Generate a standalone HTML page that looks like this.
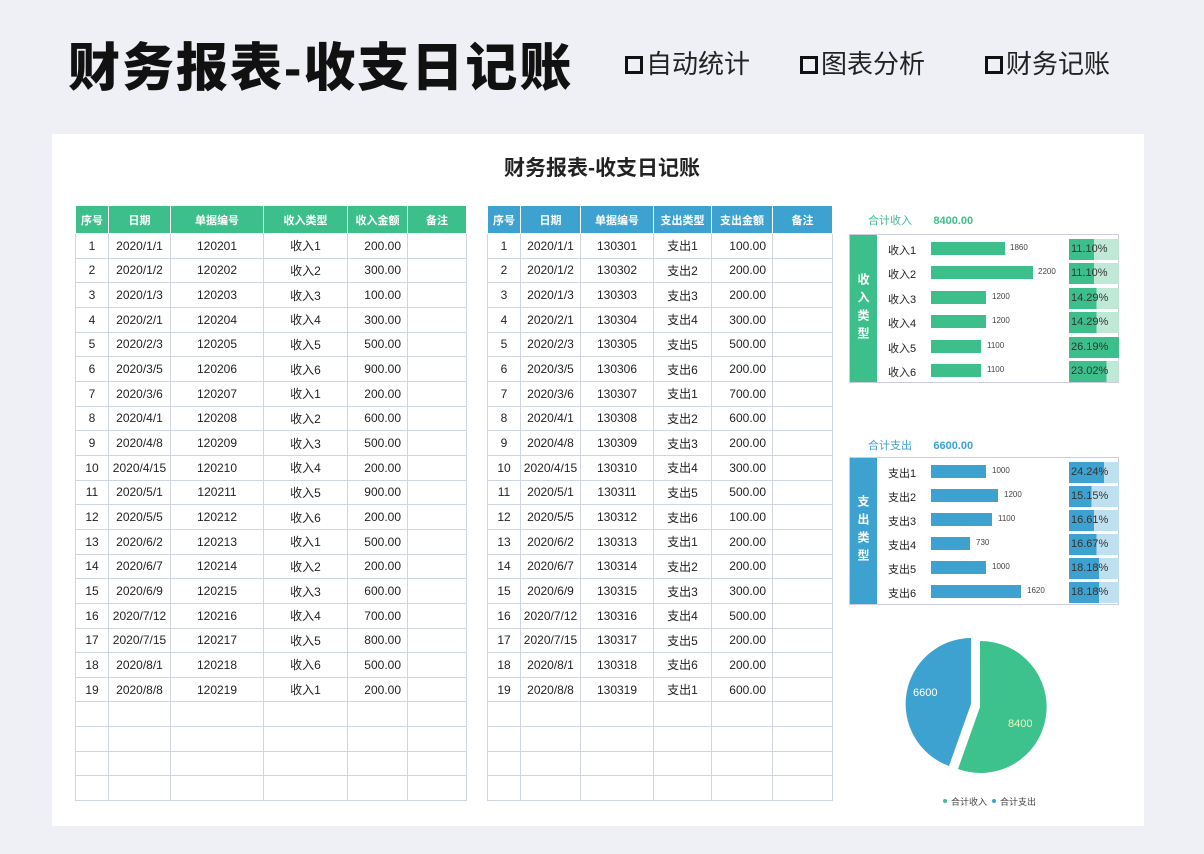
<!DOCTYPE html>
<html><head><meta charset="utf-8"><style>
*{margin:0;padding:0;box-sizing:border-box}
body{width:1204px;height:854px;background:#eef0f5;font-family:"Liberation Sans","Noto Sans CJK SC",sans-serif;position:relative;overflow:hidden;color:#222}
.h1{position:absolute;left:68px;top:26px;font-size:52px;font-weight:900;letter-spacing:2px;color:#111}
.tag{position:absolute;top:44px;font-size:26px;color:#222}
.tag b{display:inline-block;width:18px;height:18px;border:3px solid #111;margin-right:3px;vertical-align:-1px}
.card{position:absolute;left:52px;top:134px;width:1092px;height:692px;background:#fff}
.t2{position:absolute;left:0;width:100%;top:152px;text-align:center;font-size:21px;font-weight:bold;color:#222}
table{position:absolute;border-collapse:collapse;font-size:12px;table-layout:fixed}
td,th{border:1px solid #cfd6df;height:24.67px;text-align:center;padding:0;white-space:nowrap}
th{height:28px;color:#fff;font-weight:bold;font-size:11px;border-color:#fff}
td.r{text-align:right;padding-right:6px}
.g th{background:#3dbf8c}.b th{background:#3da2cf}
.pan{position:absolute;font-size:11px}
.box{position:absolute;border:1px solid #ccd;}
.side{position:absolute;left:0;top:0;bottom:0;width:27px;color:#fff;font-size:12px;display:flex;align-items:center;justify-content:center;writing-mode:vertical-rl;letter-spacing:6px;font-weight:bold}
.row{position:absolute;left:0;height:20px;width:100%}
.lab{position:absolute;left:38px;top:3px;font-size:11px}
.bar{position:absolute;left:81px;top:3px;height:13px}
.val{position:absolute;top:4px;font-size:8px;color:#444}
.pc{position:absolute;left:219px;top:0;width:50px;height:21px;font-size:11px;line-height:21px;padding-left:2px;color:#333}
</style></head><body>
<div class="h1">财务报表-收支日记账</div>
<div class="tag" style="left:625px"><b></b>自动统计</div>
<div class="tag" style="left:800px"><b></b>图表分析</div>
<div class="tag" style="left:985px"><b></b>财务记账</div>
<div class="card"></div>
<div class="t2">财务报表-收支日记账</div>

<table class="g" style="left:75px;top:205px;width:391px">
<colgroup><col style="width:33px"><col style="width:62px"><col style="width:93px"><col style="width:84px"><col style="width:60px"><col style="width:59px"></colgroup>
<tr><th>序号</th><th>日期</th><th>单据编号</th><th>收入类型</th><th>收入金额</th><th>备注</th></tr>
<tr><td>1</td><td>2020/1/1</td><td>120201</td><td>收入1</td><td class="r">200.00</td><td></td></tr>
<tr><td>2</td><td>2020/1/2</td><td>120202</td><td>收入2</td><td class="r">300.00</td><td></td></tr>
<tr><td>3</td><td>2020/1/3</td><td>120203</td><td>收入3</td><td class="r">100.00</td><td></td></tr>
<tr><td>4</td><td>2020/2/1</td><td>120204</td><td>收入4</td><td class="r">300.00</td><td></td></tr>
<tr><td>5</td><td>2020/2/3</td><td>120205</td><td>收入5</td><td class="r">500.00</td><td></td></tr>
<tr><td>6</td><td>2020/3/5</td><td>120206</td><td>收入6</td><td class="r">900.00</td><td></td></tr>
<tr><td>7</td><td>2020/3/6</td><td>120207</td><td>收入1</td><td class="r">200.00</td><td></td></tr>
<tr><td>8</td><td>2020/4/1</td><td>120208</td><td>收入2</td><td class="r">600.00</td><td></td></tr>
<tr><td>9</td><td>2020/4/8</td><td>120209</td><td>收入3</td><td class="r">500.00</td><td></td></tr>
<tr><td>10</td><td>2020/4/15</td><td>120210</td><td>收入4</td><td class="r">200.00</td><td></td></tr>
<tr><td>11</td><td>2020/5/1</td><td>120211</td><td>收入5</td><td class="r">900.00</td><td></td></tr>
<tr><td>12</td><td>2020/5/5</td><td>120212</td><td>收入6</td><td class="r">200.00</td><td></td></tr>
<tr><td>13</td><td>2020/6/2</td><td>120213</td><td>收入1</td><td class="r">500.00</td><td></td></tr>
<tr><td>14</td><td>2020/6/7</td><td>120214</td><td>收入2</td><td class="r">200.00</td><td></td></tr>
<tr><td>15</td><td>2020/6/9</td><td>120215</td><td>收入3</td><td class="r">600.00</td><td></td></tr>
<tr><td>16</td><td>2020/7/12</td><td>120216</td><td>收入4</td><td class="r">700.00</td><td></td></tr>
<tr><td>17</td><td>2020/7/15</td><td>120217</td><td>收入5</td><td class="r">800.00</td><td></td></tr>
<tr><td>18</td><td>2020/8/1</td><td>120218</td><td>收入6</td><td class="r">500.00</td><td></td></tr>
<tr><td>19</td><td>2020/8/8</td><td>120219</td><td>收入1</td><td class="r">200.00</td><td></td></tr>
<tr><td></td><td></td><td></td><td></td><td></td><td></td></tr>
<tr><td></td><td></td><td></td><td></td><td></td><td></td></tr>
<tr><td></td><td></td><td></td><td></td><td></td><td></td></tr>
<tr><td></td><td></td><td></td><td></td><td></td><td></td></tr>
</table>

<table class="b" style="left:487px;top:205px;width:345px">
<colgroup><col style="width:33px"><col style="width:60px"><col style="width:73px"><col style="width:58px"><col style="width:61px"><col style="width:60px"></colgroup>
<tr><th>序号</th><th>日期</th><th>单据编号</th><th>支出类型</th><th>支出金额</th><th>备注</th></tr>
<tr><td>1</td><td>2020/1/1</td><td>130301</td><td>支出1</td><td class="r">100.00</td><td></td></tr>
<tr><td>2</td><td>2020/1/2</td><td>130302</td><td>支出2</td><td class="r">200.00</td><td></td></tr>
<tr><td>3</td><td>2020/1/3</td><td>130303</td><td>支出3</td><td class="r">200.00</td><td></td></tr>
<tr><td>4</td><td>2020/2/1</td><td>130304</td><td>支出4</td><td class="r">300.00</td><td></td></tr>
<tr><td>5</td><td>2020/2/3</td><td>130305</td><td>支出5</td><td class="r">500.00</td><td></td></tr>
<tr><td>6</td><td>2020/3/5</td><td>130306</td><td>支出6</td><td class="r">200.00</td><td></td></tr>
<tr><td>7</td><td>2020/3/6</td><td>130307</td><td>支出1</td><td class="r">700.00</td><td></td></tr>
<tr><td>8</td><td>2020/4/1</td><td>130308</td><td>支出2</td><td class="r">600.00</td><td></td></tr>
<tr><td>9</td><td>2020/4/8</td><td>130309</td><td>支出3</td><td class="r">200.00</td><td></td></tr>
<tr><td>10</td><td>2020/4/15</td><td>130310</td><td>支出4</td><td class="r">300.00</td><td></td></tr>
<tr><td>11</td><td>2020/5/1</td><td>130311</td><td>支出5</td><td class="r">500.00</td><td></td></tr>
<tr><td>12</td><td>2020/5/5</td><td>130312</td><td>支出6</td><td class="r">100.00</td><td></td></tr>
<tr><td>13</td><td>2020/6/2</td><td>130313</td><td>支出1</td><td class="r">200.00</td><td></td></tr>
<tr><td>14</td><td>2020/6/7</td><td>130314</td><td>支出2</td><td class="r">200.00</td><td></td></tr>
<tr><td>15</td><td>2020/6/9</td><td>130315</td><td>支出3</td><td class="r">300.00</td><td></td></tr>
<tr><td>16</td><td>2020/7/12</td><td>130316</td><td>支出4</td><td class="r">500.00</td><td></td></tr>
<tr><td>17</td><td>2020/7/15</td><td>130317</td><td>支出5</td><td class="r">200.00</td><td></td></tr>
<tr><td>18</td><td>2020/8/1</td><td>130318</td><td>支出6</td><td class="r">200.00</td><td></td></tr>
<tr><td>19</td><td>2020/8/8</td><td>130319</td><td>支出1</td><td class="r">600.00</td><td></td></tr>
<tr><td></td><td></td><td></td><td></td><td></td><td></td></tr>
<tr><td></td><td></td><td></td><td></td><td></td><td></td></tr>
<tr><td></td><td></td><td></td><td></td><td></td><td></td></tr>
<tr><td></td><td></td><td></td><td></td><td></td><td></td></tr>
</table>

<div class="pan" style="left:868px;top:212px;color:#3dbf8c">合计收入 &nbsp;&nbsp;&nbsp;&nbsp;&nbsp; <b>8400.00</b></div>
<div class="box" style="left:849px;top:234px;width:270px;height:149px">
<div class="side" style="background:#3dbf8c">收入类型</div>
<div class="row" style="top:4px"><span class="lab">收入1</span><div class="bar" style="width:74px;background:#3dbf8c"></div><span class="val" style="left:160px">1860</span><div class="pc" style="background:linear-gradient(90deg,#3dbf8c 50%,#bfe9d6 50%)">11.10%</div></div>
<div class="row" style="top:28px"><span class="lab">收入2</span><div class="bar" style="width:102px;background:#3dbf8c"></div><span class="val" style="left:188px">2200</span><div class="pc" style="background:linear-gradient(90deg,#3dbf8c 50%,#bfe9d6 50%)">11.10%</div></div>
<div class="row" style="top:53px"><span class="lab">收入3</span><div class="bar" style="width:55px;background:#3dbf8c"></div><span class="val" style="left:142px">1200</span><div class="pc" style="background:linear-gradient(90deg,#3dbf8c 55%,#bfe9d6 55%)">14.29%</div></div>
<div class="row" style="top:77px"><span class="lab">收入4</span><div class="bar" style="width:55px;background:#3dbf8c"></div><span class="val" style="left:142px">1200</span><div class="pc" style="background:linear-gradient(90deg,#3dbf8c 55%,#bfe9d6 55%)">14.29%</div></div>
<div class="row" style="top:102px"><span class="lab">收入5</span><div class="bar" style="width:50px;background:#3dbf8c"></div><span class="val" style="left:137px">1100</span><div class="pc" style="background:#3dbf8c">26.19%</div></div>
<div class="row" style="top:126px"><span class="lab">收入6</span><div class="bar" style="width:50px;background:#3dbf8c"></div><span class="val" style="left:137px">1100</span><div class="pc" style="background:linear-gradient(90deg,#3dbf8c 75%,#bfe9d6 75%)">23.02%</div></div>
</div>

<div class="pan" style="left:868px;top:437px;color:#3da2cf">合计支出 &nbsp;&nbsp;&nbsp;&nbsp;&nbsp; <b>6600.00</b></div>
<div class="box" style="left:849px;top:457px;width:270px;height:148px">
<div class="side" style="background:#3da2cf">支出类型</div>
<div class="row" style="top:4px"><span class="lab">支出1</span><div class="bar" style="width:55px;background:#3da2cf"></div><span class="val" style="left:142px">1000</span><div class="pc" style="background:linear-gradient(90deg,#3da2cf 70%,#bfe0f0 70%)">24.24%</div></div>
<div class="row" style="top:28px"><span class="lab">支出2</span><div class="bar" style="width:67px;background:#3da2cf"></div><span class="val" style="left:154px">1200</span><div class="pc" style="background:linear-gradient(90deg,#3da2cf 45%,#bfe0f0 45%)">15.15%</div></div>
<div class="row" style="top:52px"><span class="lab">支出3</span><div class="bar" style="width:61px;background:#3da2cf"></div><span class="val" style="left:148px">1100</span><div class="pc" style="background:linear-gradient(90deg,#3da2cf 50%,#bfe0f0 50%)">16.61%</div></div>
<div class="row" style="top:76px"><span class="lab">支出4</span><div class="bar" style="width:39px;background:#3da2cf"></div><span class="val" style="left:126px">730</span><div class="pc" style="background:linear-gradient(90deg,#3da2cf 55%,#bfe0f0 55%)">16.67%</div></div>
<div class="row" style="top:100px"><span class="lab">支出5</span><div class="bar" style="width:55px;background:#3da2cf"></div><span class="val" style="left:142px">1000</span><div class="pc" style="background:linear-gradient(90deg,#3da2cf 60%,#bfe0f0 60%)">18.18%</div></div>
<div class="row" style="top:124px"><span class="lab">支出6</span><div class="bar" style="width:90px;background:#3da2cf"></div><span class="val" style="left:177px">1620</span><div class="pc" style="background:linear-gradient(90deg,#3da2cf 60%,#bfe0f0 60%)">18.18%</div></div>
</div>

<svg style="position:absolute;left:0;top:0" width="1204" height="854">
<path d="M980 707 L980 641 A66 66 0 1 1 958 769 Z" fill="#3dc18d"/>
<path d="M971 704 L949 766 A66 66 0 0 1 971 638 Z" fill="#3da2cf"/>
<text x="913" y="696" font-size="11" fill="#fff" font-family="Liberation Sans">6600</text>
<text x="1008" y="727" font-size="11" fill="#e8f8c0" font-family="Liberation Sans">8400</text>
<circle cx="945" cy="801" r="2" fill="#3dbf8c"/>
<text x="951" y="805" font-size="9" fill="#444" font-family="Liberation Sans,Noto Sans CJK SC">合计收入</text>
<circle cx="994" cy="801" r="2" fill="#3da2cf"/>
<text x="1000" y="805" font-size="9" fill="#444" font-family="Liberation Sans,Noto Sans CJK SC">合计支出</text>
</svg>
</body></html>
